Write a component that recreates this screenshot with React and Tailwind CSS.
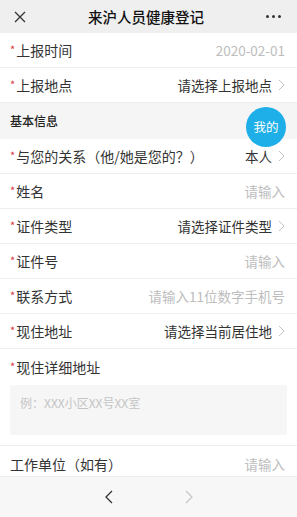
const font = { fontFamily: '"Noto Sans CJK SC", "Noto Sans", sans-serif' };

const Chevron = ({ className = 'w-[7px] h-[12px] text-[#bbbbbb]' }) => (
    <svg viewBox="0 0 7 12" className={className} fill="none" stroke="currentColor" strokeWidth="0.9">
        <path d="M1 1l5 5-5 5" />
    </svg>
);

const Row = ({ label, value, required = true, placeholder = false, arrow = false }) => (
    <div className="h-[35px] shrink-0 flex items-center justify-between pl-[10px] pr-[12px] border-b border-[#eeeeee] bg-white">
        <div className="flex items-center text-[14px] text-[#333]">
            {required && <span className="text-[#d9363e] text-[11px] mr-[1px] -mt-[2px]">*</span>}
            <span>{label}</span>
        </div>
        <div className="flex items-center gap-[6px]">
            <span className={`text-[13.5px] ${placeholder ? 'text-[#bdbdbd]' : 'text-[#333]'}`}>{value}</span>
            {arrow && <Chevron />}
        </div>
    </div>
);

export default function App() {
    return (
        <div className="w-[297px] h-[517px] bg-white relative overflow-hidden flex flex-col" style={font}>
            {/* header */}
            <div className="h-[33px] bg-[#efefef] flex items-center justify-between px-[14px] shrink-0">
                <svg viewBox="0 0 12 12" className="w-[12px] h-[12px] text-[#333]" stroke="currentColor" strokeWidth="1.3">
                    <path d="M1 1l10 10M11 1L1 11" />
                </svg>
                <span className="text-[14.5px] font-medium text-[#111]">来沪人员健康登记</span>
                <div className="flex gap-[3px] mr-[2px]">
                    <span className="w-[3px] h-[3px] rounded-full bg-[#333]"></span>
                    <span className="w-[3px] h-[3px] rounded-full bg-[#333]"></span>
                    <span className="w-[3px] h-[3px] rounded-full bg-[#333]"></span>
                </div>
            </div>

            <div className="flex-1 min-h-0 overflow-hidden flex flex-col">
                <Row label="上报时间" value="2020-02-01" placeholder />
                <Row label="上报地点" value="请选择上报地点" arrow />

                <div className="h-[36px] shrink-0 bg-[#f5f5f5] flex items-center px-[10px] text-[12px] font-medium text-[#222]">
                    基本信息
                </div>

                <Row label="与您的关系（他/她是您的？）" value="本人" arrow />
                <Row label="姓名" value="请输入" placeholder />
                <Row label="证件类型" value="请选择证件类型" arrow />
                <Row label="证件号" value="请输入" placeholder />
                <Row label="联系方式" value="请输入11位数字手机号" placeholder />
                <Row label="现住地址" value="请选择当前居住地" arrow />

                <div className="shrink-0 border-b border-[#eeeeee] px-[10px] pb-[10px]">
                    <div className="h-[36px] flex items-center text-[14px] text-[#333]">
                        <span className="text-[#d9363e] text-[11px] mr-[1px] -mt-[2px]">*</span>
                        <span>现住详细地址</span>
                    </div>
                    <div className="h-[50px] bg-[#f6f6f6] rounded-[2px] px-[10px] pt-[9px] text-[12px] text-[#c4c4c4]">
                        例：XXX小区XX号XX室
                    </div>
                </div>

                <div className="h-[36px] shrink-0 flex items-center justify-between pl-[10px] pr-[12px] bg-white">
                    <span className="text-[14px] text-[#333]">工作单位（如有）</span>
                    <span className="text-[13.5px] text-[#bdbdbd]">请输入</span>
                </div>
            </div>

            {/* bottom nav */}
            <div className="h-[41px] bg-[#f7f7f7] border-t border-[#ececec] flex items-center justify-center gap-[72px] shrink-0">
                <svg viewBox="0 0 8 14" className="w-[8px] h-[14px] text-[#333]" fill="none" stroke="currentColor" strokeWidth="1.3">
                    <path d="M7 1L1 7l6 6" />
                </svg>
                <svg viewBox="0 0 8 14" className="w-[8px] h-[14px] text-[#c8c8c8]" fill="none" stroke="currentColor" strokeWidth="1.3">
                    <path d="M1 1l6 6-6 6" />
                </svg>
            </div>

            {/* floating button */}
            <div className="absolute left-[246px] top-[107px] w-[40px] h-[40px] rounded-full bg-[#1eaee8] flex items-center justify-center text-white text-[12.5px]">
                我的
            </div>
        </div>
    );
}
